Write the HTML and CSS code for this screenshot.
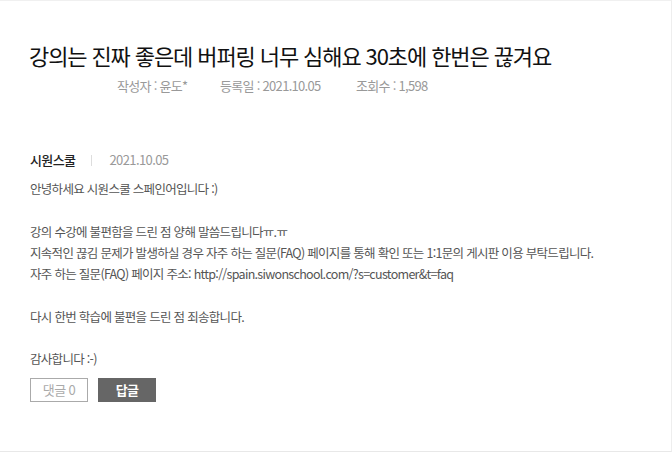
FILE: index.html
```html
<!DOCTYPE html>
<html lang="ko">
<head>
<meta charset="utf-8">
<link rel="stylesheet" href="styles.css">
</head>
<body>
<div class="page">
  <div class="head">
    <h1 class="title">강의는 진짜 좋은데 버퍼링 너무 심해요 30초에 한번은 끊겨요</h1>
    <div class="meta">
      <span class="meta-item">작성자 : 윤도*</span>
      <span class="meta-item">등록일 : 2021.10.05</span>
      <span class="meta-item">조회수 : 1,598</span>
    </div>
  </div>
  <div class="reply">
    <div class="reply-head">
      <span class="author">시원스쿨</span>
      <span class="sep"></span>
      <span class="date">2021.10.05</span>
    </div>
    <div class="reply-body">안녕하세요 시원스쿨 스페인어입니다 :)<br><br>강의 수강에 불편함을 드린 점 양해 말씀드립니다ㅠ.ㅠ<br>지속적인 끊김 문제가 발생하실 경우 자주 하는 질문(FAQ) 페이지를 통해 확인 또는 1:1문의 게시판 이용 부탁드립니다.<br>자주 하는 질문(FAQ) 페이지 주소: http://spain.siwonschool.com/?s=customer&amp;t=faq<br><br>다시 한번 학습에 불편을 드린 점 죄송합니다.<br><br>감사합니다 :-)</div>
    <div class="buttons">
      <button class="btn btn-line">댓글 0</button>
      <button class="btn btn-dark">답글</button>
    </div>
  </div>
</div>
</body>
</html>
```
FILE: styles.css
```css
html, body {
  margin: 0;
  padding: 0;
  background: #fff;
}
body {
  font-family: "Noto Sans CJK KR", "Noto Sans", sans-serif;
  width: 672px;
  height: 453px;
  overflow: hidden;
}
.page {
  box-sizing: border-box;
  width: 672px;
  height: 452px;
  border-top: 1px solid #f0f0f0;
  border-right: 1px solid #eeeeee;
  border-bottom: 1px solid #e8e8e8;
}
.head {
  padding: 38px 0 0 29px;
}
.title {
  margin: 0;
  font-size: 22px;
  font-weight: 400;
  color: #111;
  line-height: 32px;
  letter-spacing: -1.1px;
}
.meta {
  display: flex;
  padding-left: 88px;
  margin-top: 5px;
  font-size: 13px;
  color: #999;
  line-height: 20px;
  letter-spacing: -0.7px;
}
.meta-item:nth-child(1) { width: 103px; }
.meta-item:nth-child(2) { width: 136px; }
.reply {
  padding: 54px 0 0 30px;
}
.reply-head {
  display: flex;
  align-items: center;
  font-size: 13px;
  line-height: 20px;
  letter-spacing: -0.6px;
}
.author {
  color: #222;
  font-weight: 500;
}
.sep {
  width: 1px;
  height: 11px;
  background: #ddd;
  margin: 0 17px 0 16px;
}
.date {
  color: #999;
}
.reply-body {
  margin-top: 8px;
  font-size: 12.5px;
  line-height: 21.3px;
  color: #555;
  letter-spacing: -0.7px;
}
.buttons {
  display: flex;
  gap: 10px;
  margin-top: 8px;
}
.btn {
  box-sizing: border-box;
  width: 58px;
  height: 24px;
  font-family: inherit;
  font-size: 13px;
  letter-spacing: -0.6px;
  padding: 0;
  line-height: 22px;
}
.btn-line {
  background: #fff;
  border: 1px solid #aaa;
  color: #aaa;
}
.btn-dark {
  background: #666;
  border: 1px solid #666;
  color: #fff;
  font-weight: 700;
}
```
